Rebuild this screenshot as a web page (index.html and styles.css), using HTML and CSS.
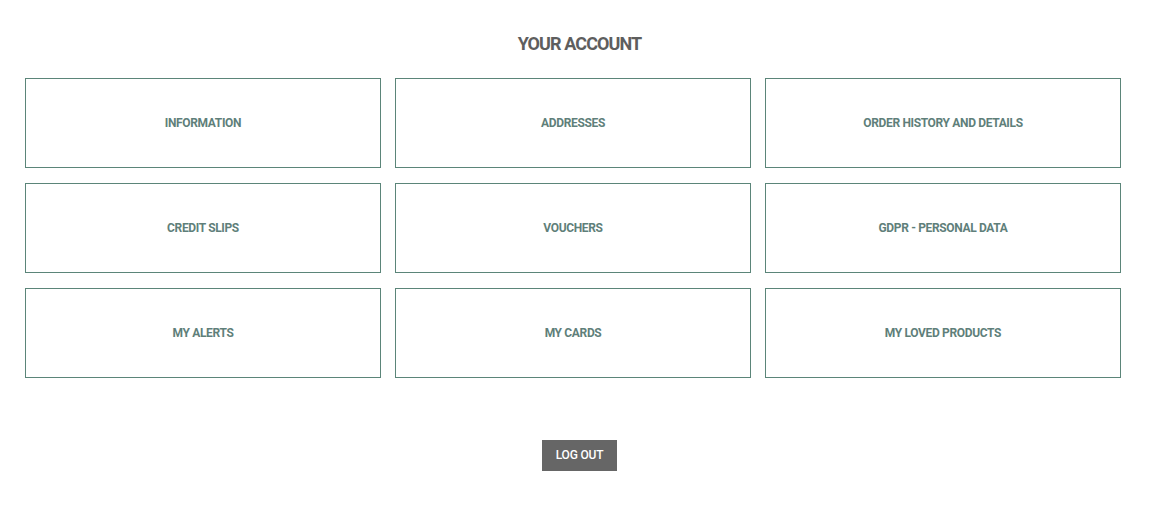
FILE: index.html
```html
<!DOCTYPE html>
<html lang="en">
<head>
    <meta charset="UTF-8">
    <meta name="viewport" content="width=device-width, initial-scale=1.0">
    <title>Your account</title>
    <link rel="stylesheet" href="styles.css">
</head>
<body>
    <div class="container">
        <h1 class="page-title">Your account</h1>

        <div class="links">
            <a class="link-card" href="#">Information</a>
            <a class="link-card" href="#">Addresses</a>
            <a class="link-card" href="#">Order history and details</a>
            <a class="link-card" href="#">Credit slips</a>
            <a class="link-card" href="#">Vouchers</a>
            <a class="link-card" href="#">GDPR - Personal data</a>
            <a class="link-card" href="#">My alerts</a>
            <a class="link-card" href="#">My cards</a>
            <a class="link-card" href="#">My loved products</a>
        </div>

        <div class="logout">
            <a class="logout-btn" href="#">Log out</a>
        </div>
    </div>
</body>
</html>
```

FILE: styles.css
```css
* {
    box-sizing: border-box;
}

body {
    font-family: Roboto, "Liberation Sans", sans-serif;
    margin: 0;
    padding: 0;
    background: #fff;
    color: #555;
}

.container {
    padding: 33px 28px 0 25px;
}

.page-title {
    margin: 0 0 23px;
    padding-left: 13px;
    text-align: center;
    font-size: 18px;
    font-weight: 700;
    line-height: 22px;
    color: #5e5e5e;
    text-transform: uppercase;
    letter-spacing: -0.9px;
}

.links {
    display: grid;
    grid-template-columns: repeat(3, 356px);
    column-gap: 14px;
    row-gap: 15px;
}

.link-card {
    display: flex;
    align-items: center;
    justify-content: center;
    height: 90px;
    border: 1px solid #5b8579;
    color: #5f7f7a;
    font-size: 12px;
    font-weight: 700;
    letter-spacing: -0.35px;
    text-transform: uppercase;
    text-decoration: none;
}

.logout {
    margin-top: 62px;
    padding-left: 13px;
    text-align: center;
}

.logout-btn {
    display: inline-block;
    background: #666;
    color: #fff;
    font-size: 12px;
    font-weight: 500;
    line-height: 31px;
    padding: 0 14px;
    letter-spacing: -0.2px;
    text-transform: uppercase;
    text-decoration: none;
}
```
